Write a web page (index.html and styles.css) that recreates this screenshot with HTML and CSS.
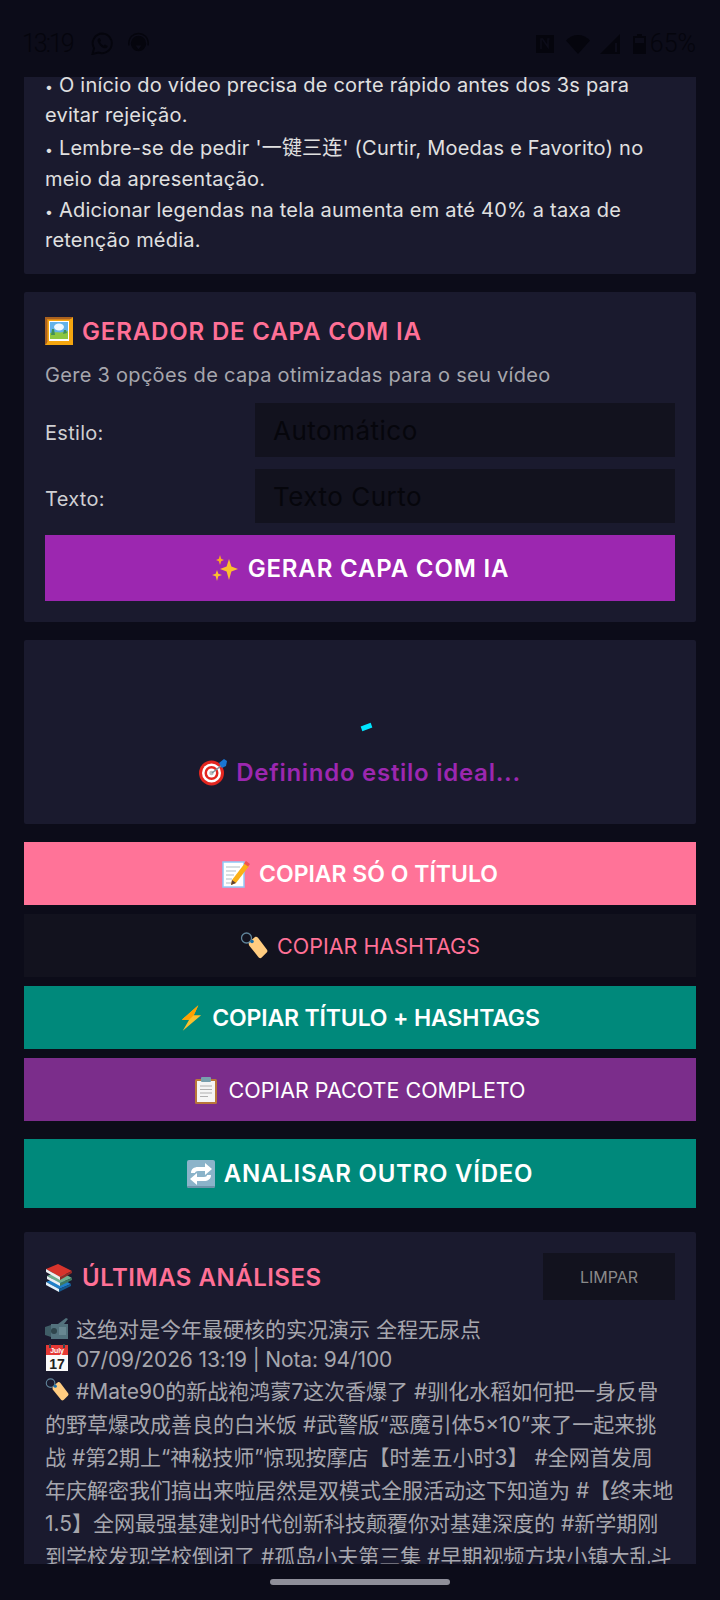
FILE: index.html
```html
<!DOCTYPE html>
<html lang="pt-BR">
<head>
  <meta charset="UTF-8">
  <meta name="viewport" content="width=device-width, initial-scale=1.0">
  <title>Gerador de Capa</title>
  <link rel="stylesheet" href="styles.css">
</head>
<body>
  <svg class="sprites" xmlns="http://www.w3.org/2000/svg">
    <symbol id="i-picture" viewBox="0 0 28 28">
      <rect x="0" y="0" width="28" height="28" fill="#f5a60f"/>
      <path d="M0 0h28l-2 2H2v24l-2 2z" fill="#a9611f"/>
      <path d="M2 2h23v1H3v22H2z" fill="#d9861a"/>
      <rect x="4" y="4" width="20" height="20" fill="#fff"/>
      <rect x="5" y="5" width="18" height="17" fill="#62b2e8"/>
      <ellipse cx="14" cy="10" rx="5" ry="3.500" fill="#eef7fc"/>
      <path d="M5 22v-6c5-2 11 1 18-2v8z" fill="#8cc63f"/>
      <path d="M6 18l1-6h2l1 6zM18 17l1-4h2l1 3z" fill="#3f8f5a"/>
    </symbol>
    <symbol id="i-sparkles" viewBox="0 0 28 28">
      <path d="M18 5l2.400 7.600L27 15l-6.600 2.400L18 26l-2.400-8.600L9 15l6.600-2.400z" fill="#fbc02d"/>
      <path d="M9 1l1.200 3.800L13 6l-2.800 1.200L9 11 7.800 7.200 5 6l2.800-1.200z" fill="#f9a825"/>
      <path d="M6 16l1.300 3.700L11 21l-3.700 1.300L6 27l-1.300-4.700L1 21l3.700-1.300z" fill="#fbc02d"/>
    </symbol>
    <symbol id="i-target" viewBox="0 0 28 28">
      <circle cx="12.500" cy="15" r="12.500" fill="#e3261f"/>
      <circle cx="12.500" cy="15" r="9.500" fill="#fff"/>
      <circle cx="12.500" cy="15" r="7" fill="#e3261f"/>
      <circle cx="12.500" cy="15" r="4.500" fill="#fff"/>
      <circle cx="12.500" cy="15" r="2.200" fill="#bdbdbd"/>
      <path d="M13 15L23 7" stroke="#78909c" stroke-width="1.500"/>
      <path d="M20 5l5-4 3 2-1 5-4 2z" fill="#1976d2"/>
    </symbol>
    <symbol id="i-memo" viewBox="0 0 28 28">
      <rect x="1" y="2" width="21" height="25" fill="#fff" stroke="#90caf9" stroke-width="1.500"/>
      <path d="M4 7h14M4 11h10M4 15h8M4 19h6M4 23h5" stroke="#b0bec5" stroke-width="1.200"/>
      <path d="M23 3l4 3-13 17-5 2 1-5z" fill="#fbb016"/>
      <path d="M24 1l4 3-2 2.500-4-3z" fill="#ef5350"/>
      <path d="M10 20l4 3-5 2z" fill="#5d4037"/>
    </symbol>
    <symbol id="i-tag" viewBox="0 0 28 28">
      <path d="M9 10l6-5c1-.5 2-.3 3 .8l9 12c.7 1 .5 2-.3 2.800l-5 5c-1 .8-2 .7-3-.2L9.500 14c-.8-1-1-3-.5-4z" fill="#ffcc80"/>
      <circle cx="6.500" cy="6" r="5" fill="none" stroke="#5f8399" stroke-width="1.300"/>
      <circle cx="12" cy="9.500" r="1.800" fill="#1a6fa8"/>
    </symbol>
    <symbol id="i-bolt" viewBox="0 0 24 28">
      <path d="M20 0L2 16h8L3 28 23 11h-8z" fill="#fbc02d"/>
      <path d="M20 0L2 16h8l5-5z" fill="#ffa000"/>
    </symbol>
    <symbol id="i-clipboard" viewBox="0 0 24 28">
      <rect x="1" y="3" width="22" height="25" rx="1.500" fill="#b9773a"/>
      <rect x="3" y="5" width="18" height="21" fill="#f5f5f5"/>
      <rect x="7" y="1" width="10" height="5" rx="1" fill="#78a0ae"/>
      <path d="M6 10h12M6 13.500h12M6 17h12M6 20.500h8" stroke="#b0b0b0" stroke-width="1.200"/>
    </symbol>
    <symbol id="i-repeat" viewBox="0 0 28 28">
      <rect x="0" y="0" width="28" height="28" rx="2" fill="#8bb3c9"/>
      <path d="M0 26h28v0a2 2 0 0 1-2 2H2a2 2 0 0 1-2-2z" fill="#6d93aa"/>
      <path d="M4 13c0-4 3-6 7-6h7V3l7 6-7 6v-4h-7c-2 0-3 1-3 2z" fill="#fff"/>
      <path d="M24 15c0 4-3 6-7 6h-7v4l-7-6 7-6v4h7c2 0 3-1 3-2z" fill="#fff"/>
    </symbol>
    <symbol id="i-books" viewBox="0 0 28 28">
      <path d="M1 18l12-5 13 7-12 5z" fill="#1f7fc9"/>
      <path d="M1 18l13 7v3L1 21z" fill="#e3f2fd"/>
      <path d="M14 25l12-5v2l-12 6z" fill="#155a8f"/>
      <path d="M2 12l12-5 13 7-12 5z" fill="#6fae8f"/>
      <path d="M2 12l13 7v3L2 15z" fill="#eceff1"/>
      <path d="M15 19l12-5v2l-12 6z" fill="#3f7a60"/>
      <path d="M1 5l12-5 14 7-12 6z" fill="#d8342c"/>
      <path d="M1 5l14 8v3L1 8z" fill="#eceff1"/>
      <path d="M15 13l12-6v2l-12 7z" fill="#8e2a26"/>
    </symbol>
    <symbol id="i-camera" viewBox="0 0 24 28">
      <path d="M6 10h17v15H6z" fill="#53727d"/>
      <path d="M0 13l6-2v12l-6-2z" fill="#3f5d66"/>
      <path d="M13 10l8-6 2 1-4 5z" fill="#53727d"/>
      <circle cx="9" cy="17" r="3" fill="#2f454c"/>
      <rect x="14" y="13" width="7" height="8" fill="#688791"/>
    </symbol>
    <symbol id="i-calendar" viewBox="0 0 24 28">
      <rect x="1" y="1" width="22" height="26" fill="#fafafa"/>
      <rect x="1" y="1" width="22" height="10" fill="#e53935"/>
      <path d="M5 0v4M19 0v4" stroke="#37474f" stroke-width="2"/>
      <text x="12" y="9" text-anchor="middle" class="cal-month">July</text>
      <text x="12" y="25" text-anchor="middle" class="cal-day">17</text>
    </symbol>
  </svg>

  <div class="screen">
    <header class="status">
      <div class="status-side">
        <span class="clock">13:19</span>
        <svg class="st-app" viewBox="0 0 24 24"><path d="M12 1.500A10.300 10.300 0 0 0 3.200 17L1.500 23l6.200-1.600A10.300 10.300 0 1 0 12 1.500z" fill="none" stroke="currentColor" stroke-width="2"/><path d="M8 6.500c-1.500 1-1.500 3 0 5.500s4 5 6.500 5c2 0 3-1.500 3-2.500l-3-1.500-1.200 1.300c-1.800-.8-3-2-3.800-3.800L10.500 9 9.300 6.500z" fill="currentColor"/></svg>
        <svg class="st-app" viewBox="0 0 24 24"><circle cx="12" cy="12" r="8" fill="currentColor"/><path d="M2 14C1 5 7 1.500 12 1.500S23 5 22 14" fill="none" stroke="currentColor" stroke-width="1.500"/><path d="M9 14l3 4 3-4z" fill="#0c0c19"/></svg>
      </div>
      <div class="status-side">
        <svg class="st-nfc" viewBox="0 0 18 20"><path d="M0 1h18v18H0z" fill="currentColor"/><path d="M5 15V5h1.500L12 13V5h1.500" fill="none" stroke="#0c0c19" stroke-width="1.500"/></svg>
        <svg class="st-wifi" viewBox="0 0 24 20"><path d="M0 6.500C6-1 18-1 24 6.500L12 20z" fill="currentColor"/></svg>
        <svg class="st-signal" viewBox="0 0 20 20"><path d="M0 20L20 0v20z" fill="currentColor"/><path d="M15 9h2v9h-2z" fill="#0c0c19"/></svg>
        <svg class="st-batt" viewBox="0 0 13 20"><path d="M4 0h5v2h4v18H0V2h4z" fill="currentColor"/><path d="M2 4h9v5H2z" fill="#0c0c19"/></svg>
        <span class="batt-num">65%</span>
      </div>
    </header>

    <main class="scroll">
      <section class="card tips">
        <p><span class="dot">•</span> O início do vídeo precisa de corte rápido antes dos 3s para evitar rejeição.</p>
        <p class="tip-cjk"><span class="dot">•</span> Lembre-se de pedir '一键三连' (Curtir, Moedas e Favorito) no meio da apresentação.</p>
        <p><span class="dot">•</span> Adicionar legendas na tela aumenta em até 40% a taxa de retenção média.</p>
      </section>

      <section class="card cover">
        <h2 class="card-title"><svg class="emoji"><use href="#i-picture"/></svg>GERADOR DE CAPA COM IA</h2>
        <p class="cover-sub">Gere 3 opções de capa otimizadas para o seu vídeo</p>
        <div class="field">
          <label class="field-label">Estilo:</label>
          <select class="field-input"><option>Automático</option></select>
        </div>
        <div class="field">
          <label class="field-label">Texto:</label>
          <select class="field-input"><option>Texto Curto</option></select>
        </div>
        <button class="btn btn-make"><svg class="emoji"><use href="#i-sparkles"/></svg>GERAR CAPA COM IA</button>
      </section>

      <section class="card loading">
        <svg class="spinner" viewBox="0 0 16 12"><path d="M2.500 8.800L12.500 5.200" stroke="#00e5ff" stroke-width="5"/></svg>
        <p class="loading-text"><svg class="emoji"><use href="#i-target"/></svg>Definindo estilo ideal...</p>
      </section>

      <div class="copy-btns">
        <button class="btn btn-pink"><svg class="emoji"><use href="#i-memo"/></svg>COPIAR SÓ O TÍTULO</button>
        <button class="btn btn-dark"><svg class="emoji"><use href="#i-tag"/></svg>COPIAR HASHTAGS</button>
        <button class="btn btn-teal"><svg class="emoji emoji-sm"><use href="#i-bolt"/></svg>COPIAR TÍTULO + HASHTAGS</button>
        <button class="btn btn-purple"><svg class="emoji emoji-sm"><use href="#i-clipboard"/></svg>COPIAR PACOTE COMPLETO</button>
      </div>

      <button class="btn btn-again"><svg class="emoji"><use href="#i-repeat"/></svg>ANALISAR OUTRO VÍDEO</button>

      <section class="card history">
        <div class="history-head">
          <h2 class="card-title"><svg class="emoji"><use href="#i-books"/></svg>ÚLTIMAS ANÁLISES</h2>
          <button class="btn-clear">LIMPAR</button>
        </div>
        <p class="hist-line"><svg class="emoji emoji-sm"><use href="#i-camera"/></svg>这绝对是今年最硬核的实况演示 全程无尿点</p>
        <p class="hist-line hist-date"><svg class="emoji emoji-sm"><use href="#i-calendar"/></svg>07/09/2026 13:19 | Nota: 94/100</p>
        <p class="hist-tags"><svg class="emoji emoji-sm"><use href="#i-tag"/></svg>#Mate90的新战袍鸿蒙7这次香爆了 #驯化水稻如何把一身反骨<br>的野草爆改成善良的白米饭 #武警版“恶魔引体5×10”来了一起来挑<br>战 #第2期上“神秘技师”惊现按摩店【时差五小时3】 #全网首发周<br>年庆解密我们搞出来啦居然是双模式全服活动这下知道为 #【终末地<br>1.5】全网最强基建划时代创新科技颠覆你对基建深度的 #新学期刚<br>到学校发现学校倒闭了 #孤岛小夫第三集 #早期视频方块小镇大乱斗</p>
      </section>
    </main>

    <footer class="nav-area"><div class="home-bar"></div></footer>
  </div>
</body>
</html>
```

FILE: styles.css
```css
* {
  box-sizing: border-box;
}

body {
  margin: 0;
  background: #0c0c19;
  font-family: Inter, "Noto Sans CJK SC", sans-serif;
  color: #e0e0e0;
}

p,
h2 {
  margin: 0;
}

.sprites {
  display: none;
}

.cal-day {
  font-family: "Liberation Sans", sans-serif;
  font-size: 14px;
  font-weight: 700;
  fill: #222;
}

.cal-month {
  font-family: "Liberation Sans", sans-serif;
  font-size: 7px;
  font-weight: 700;
  fill: #fff;
}

.screen {
  height: 1600px;
  display: flex;
  flex-direction: column;
  overflow: hidden;
}

/* status bar */
.status {
  height: 77px;
  flex: none;
  display: flex;
  justify-content: space-between;
  align-items: center;
  padding: 10px 24px 0 22px;
  color: #05050d;
  font-family: Roboto, sans-serif;
  font-weight: 300;
  font-size: 25px;
}

.status-side {
  display: flex;
  align-items: center;
}

.clock {
  margin-right: 18px;
  letter-spacing: -2px;
}

.st-app {
  width: 23px;
  height: 23px;
  margin-right: 13px;
}

.st-nfc {
  width: 18px;
  height: 20px;
  margin-right: 12px;
}

.st-wifi {
  width: 24px;
  height: 20px;
  margin-right: 10px;
}

.st-signal {
  width: 20px;
  height: 20px;
  margin-right: 13px;
}

.st-batt {
  width: 13px;
  height: 20px;
  margin-right: 4px;
}

/* scrolled content */
.scroll {
  height: 1487px;
  flex: none;
  overflow: hidden;
  padding: 0 24px;
}

.card {
  background: #1a1a2e;
  border-radius: 2px;
  padding: 21px;
  margin-bottom: 18px;
}

.emoji {
  width: 28px;
  height: 28px;
  margin-right: 9px;
  flex: none;
  vertical-align: -5px;
}

.emoji-sm {
  width: 24px;
  height: 28px;
  margin-right: 7px;
}

.tips {
  margin-top: -7px;
  padding-top: 0;
  padding-bottom: 19px;
  font-size: 20px;
  line-height: 30px;
  letter-spacing: .22px;
}

.dot {
  font-size: 14px;
  line-height: 1;
}

.tip-cjk {
  margin-top: 3px;
  line-height: 31px;
}

.card-title {
  display: flex;
  align-items: center;
  height: 36px;
  font-size: 24px;
  font-weight: 600;
  letter-spacing: .85px;
  color: #ff7096;
}

.cover-sub {
  margin: 12px 0 14px;
  font-size: 20px;
  line-height: 28px;
  letter-spacing: .29px;
  color: #a6a6ad;
}

.field {
  display: grid;
  grid-template-columns: 1fr 2fr;
  align-items: center;
  margin-bottom: 12px;
}

.field-label {
  padding-top: 6px;
  font-size: 20px;
  letter-spacing: .3px;
  color: #cfcfd2;
}

.field-input {
  appearance: none;
  height: 54px;
  padding: 0 18px;
  border: 0;
  border-radius: 0;
  background: #12121e;
  color: #06060c;
  font: 26px Inter, sans-serif;
  letter-spacing: .5px;
}

.btn {
  display: flex;
  justify-content: center;
  align-items: center;
  width: 100%;
  border: 0;
  color: #fff;
  font-family: inherit;
  font-size: 23px;
  font-weight: 600;
}

.btn-make {
  height: 66px;
  background: #9c27b0;
  font-size: 24px;
  letter-spacing: .84px;
}

.loading {
  height: 184px;
  display: flex;
  flex-direction: column;
  align-items: center;
  padding: 0;
}

.spinner {
  width: 16px;
  height: 12px;
  margin: 80px 0 0 14px;
}

.loading-text {
  display: flex;
  align-items: center;
  margin-top: 22px;
  height: 36px;
  font-size: 24px;
  font-weight: 600;
  letter-spacing: .73px;
  color: #9c27b0;
}

.copy-btns {
  display: flex;
  flex-direction: column;
  gap: 9px;
  margin-bottom: 18px;
}

.copy-btns .btn {
  height: 63px;
}

.btn-pink {
  background: #ff7398;
}

.btn-dark {
  background: #12121e;
  color: #ff7096;
  font-size: 21.5px !important;
  font-weight: 400 !important;
}

.btn-teal {
  background: #00897b;
  letter-spacing: -.15px;
}

.btn-teal .emoji-sm {
  width: 22px;
  margin-right: 10px;
}

.btn-purple {
  background: #7b2d8b;
  font-size: 21.5px !important;
  font-weight: 400 !important;
}

.btn-purple .emoji-sm {
  margin-right: 10px;
}

.btn-again {
  height: 69px;
  margin-bottom: 24px;
  background: #00897b;
  font-size: 24px;
  letter-spacing: .75px;
}

.history-head {
  display: flex;
  justify-content: space-between;
  align-items: center;
  height: 47px;
  margin-bottom: 14px;
}

.history .card-title {
  padding-top: 2px;
  letter-spacing: .5px;
}

.btn-clear {
  width: 132px;
  height: 47px;
  border: 0;
  background: #12121e;
  color: #8a8a8a;
  font-family: inherit;
  font-size: 16px;
}

.hist-line {
  font-size: 21px;
  line-height: 29px;
  color: #a6a6ad;
}

.hist-date {
  letter-spacing: -.13px;
}

.hist-tags {
  margin-top: 1px;
  font-size: 21px;
  line-height: 33px;
  color: #a6a6ad;
}

/* gesture bar */
.nav-area {
  flex: 1;
  display: flex;
  justify-content: center;
  padding-top: 15px;
}

.home-bar {
  width: 180px;
  height: 6px;
  border-radius: 3px;
  background: #8e8e99;
}
```
